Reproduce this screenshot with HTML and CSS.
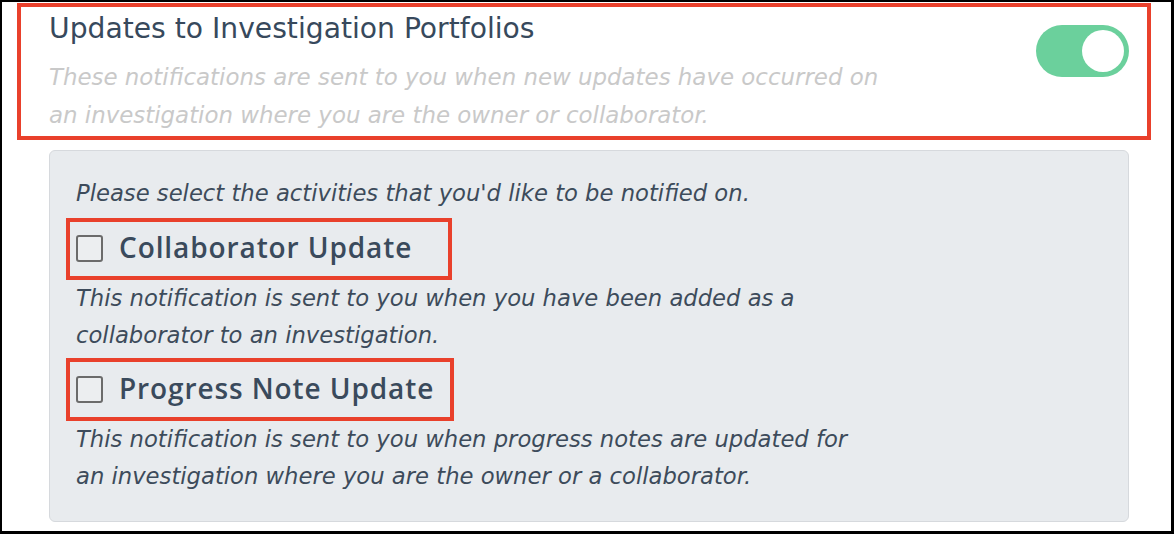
FILE: index.html
```html
<!DOCTYPE html>
<html lang="en">
<head>
<meta charset="utf-8">
<title>Notification settings</title>
<link rel="stylesheet" href="styles.css">
</head>
<body>
<div class="frame">
  <section class="settings">
    <div class="notif-header">
      <div class="notif-text">
        <h2 class="notif-title">Updates to Investigation Portfolios</h2>
        <p class="notif-desc">These notifications are sent to you when new updates have occurred on an investigation where you are the owner or collaborator.</p>
      </div>
      <span class="toggle is-on" role="switch" aria-checked="true"><span class="toggle-knob"></span></span>
    </div>
    <div class="activity-panel">
      <p class="panel-intro">Please select the activities that you'd like to be notified on.</p>
      <label class="activity">
        <span class="checkbox"></span>
        <span class="activity-name">Collaborator Update</span>
      </label>
      <p class="activity-desc">This notification is sent to you when you have been added as a collaborator to an investigation.</p>
      <label class="activity activity-second">
        <span class="checkbox"></span>
        <span class="activity-name">Progress Note Update</span>
      </label>
      <p class="activity-desc">This notification is sent to you when progress notes are updated for an investigation where you are the owner or a collaborator.</p>
    </div>
  </section>
</div>
</body>
</html>
```

FILE: styles.css
```css
* {
  box-sizing: border-box;
}

html,
body {
  margin: 0;
  padding: 0;
  background: #ffffff;
}

body {
  font-family: "DejaVu Sans", Lato, sans-serif;
}

.frame {
  width: 1174px;
  height: 534px;
  border-style: solid;
  border-color: #000000;
  border-width: 2px 3px 3px 2px;
  padding: 1px 0 0 15px;
  overflow: hidden;
}

.settings {
  width: 1134px;
}

.notif-header {
  height: 137px;
  border: 4px solid #e9402b;
  display: flex;
  justify-content: space-between;
  align-items: flex-start;
  padding: 6px 18px 2px 28px;
}

.notif-title {
  margin: 0;
  font-size: 28.2px;
  line-height: 32px;
  font-weight: 400;
  color: #37495c;
}

.notif-desc {
  margin: 14px 0 0;
  max-width: 845px;
  font-size: 22.9px;
  line-height: 37.5px;
  font-style: italic;
  color: #c9c9c9;
}

.toggle {
  flex: none;
  margin-top: 12px;
  width: 93px;
  height: 52px;
  border-radius: 26px;
  background: #6bd09c;
  padding: 5px;
  display: flex;
  justify-content: flex-end;
}

.toggle-knob {
  width: 42px;
  height: 42px;
  border-radius: 50%;
  background: #ffffff;
}

.activity-panel {
  margin: 10px 22px 0 32px;
  height: 372px;
  background: #e8ebee;
  border: 1px solid #d6d9dd;
  border-radius: 6px;
  padding: 24px 26px 27px 26px;
}

.panel-intro,
.activity-desc {
  font-size: 22.7px;
  line-height: 37.5px;
  font-style: italic;
  color: #3d4b5b;
}

.panel-intro {
  margin: 0 0 5px;
}

.activity {
  display: flex;
  align-items: center;
  gap: 16px;
  width: 386px;
  height: 62px;
  margin-left: -10px;
  border: 4px solid #e9402b;
  padding-left: 6px;
}

.activity-second {
  margin-top: 3px;
  width: 388px;
  height: 63px;
}

.checkbox {
  flex: none;
  width: 27px;
  height: 27px;
  border: 2px solid #6b6b6b;
  border-radius: 3px;
  background: #eceef0;
}

.activity-name {
  font-family: "Open Sans", "DejaVu Sans", sans-serif;
  font-size: 28px;
  line-height: 32px;
  letter-spacing: 0.9px;
  font-weight: 600;
  color: #3a4a5c;
  padding-bottom: 3px;
}

.activity-desc {
  margin: 0;
  max-width: 795px;
}
```
